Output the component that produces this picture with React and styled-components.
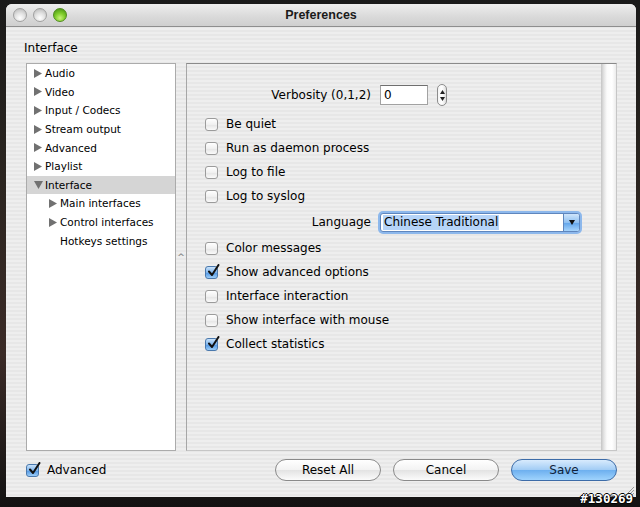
import React from "react";
import styled, { createGlobalStyle } from "styled-components";

const GlobalStyle = createGlobalStyle`
  html, body {
    margin: 0;
    padding: 0;
    background: #141414;
    font-family: "DejaVu Sans", "Noto Sans", sans-serif;
    color: #000;
  }
`;

const pinstripe = `repeating-linear-gradient(
  to bottom,
  #eeeeee 0px,
  #eeeeee 2px,
  #e7e7e7 2px,
  #e7e7e7 4px
)`;

const Page = styled.div`
  position: relative;
  width: 640px;
  height: 507px;
  box-sizing: border-box;
  padding: 4px 4px 10px 6px;
  background: linear-gradient(
    to bottom,
    #1a1a1a 0%,
    #2b2520 35%,
    #3b2b27 70%,
    #121212 100%
  );
`;

const Window = styled.div`
  position: relative;
  width: 630px;
  height: 493px;
  display: flex;
  flex-direction: column;
  border-radius: 6px 6px 0 0;
  overflow: hidden;
  background: ${pinstripe};
`;

const TitleBar = styled.div`
  flex-shrink: 0;
  height: 22px;
  display: grid;
  grid-template-columns: 1fr auto 1fr;
  align-items: center;
  background: linear-gradient(to bottom, #ededed, #d9d9d9 60%, #cfcfcf);
  border-bottom: 1px solid #8e8e8e;
`;

const Lights = styled.div`
  display: flex;
  gap: 6px;
  padding-left: 7px;
`;

const Light = styled.span`
  width: 14px;
  height: 14px;
  border-radius: 50%;
  box-sizing: border-box;
  border: 1px solid ${(p) => (p.$green ? "#4f8a1d" : "#a0a0a0")};
  background: ${(p) =>
    p.$green
      ? "radial-gradient(circle at 50% 75%, #c7f27a 0%, #7fcc2a 45%, #3f8a12 100%)"
      : "radial-gradient(circle at 50% 75%, #ffffff 0%, #e2e2e2 45%, #b3b3b3 100%)"};
`;

const Title = styled.div`
  font-family: "Liberation Sans", Arial, sans-serif;
  font-weight: bold;
  font-size: 12.5px;
  color: #1a1a1a;
`;

const Body = styled.div`
  flex: 1;
  display: flex;
  flex-direction: column;
  padding: 13px 19px 0 20px;
`;

const Heading = styled.div`
  margin-left: -2px;
  margin-bottom: 7px;
  font-size: 12px;
  line-height: 16px;
`;

const Main = styled.div`
  display: flex;
  height: 388px;
`;

const Tree = styled.div`
  width: 150px;
  box-sizing: border-box;
  border: 1px solid #ababab;
  background: #fff;
`;

const TreeRow = styled.div`
  height: 18.6px;
  display: flex;
  align-items: center;
  padding-left: ${(p) => (p.$level ? 22 : 7)}px;
  background: ${(p) => (p.$selected ? "#d5d5d5" : "transparent")};
  font-size: 10.5px;
`;

const Arrow = styled.span`
  width: 11px;
  height: 10px;
  display: inline-flex;
  align-items: center;
`;

const Splitter = styled.div`
  width: 10px;
  display: flex;
  align-items: center;
  justify-content: center;
  color: #777;
  font-size: 9px;
`;

const ContentPanel = styled.div`
  flex: 1;
  display: flex;
  border-top: 1px solid #8a8a8a;
  border-left: 1px solid #a6a6a6;
  border-right: 1px solid #c6c6c6;
  border-bottom: 1px solid #c6c6c6;
`;

const Form = styled.div`
  flex: 1;
  padding: 20px 0 0 18px;
  font-size: 12px;
`;

const ScrollTrack = styled.div`
  width: 15px;
  background: linear-gradient(
    to right,
    #c4c4c4 0px,
    #e4e4e4 3px,
    #fbfbfb 6px,
    #ffffff 11px,
    #ececec 15px
  );
`;

const FieldRow = styled.div`
  display: flex;
  align-items: center;
  height: ${(p) => p.$h}px;
  margin-bottom: ${(p) => p.$mb || 0}px;
`;

const FieldLabel = styled.div`
  width: 166px;
  margin-right: 9px;
  text-align: right;
`;

const NumberInput = styled.div`
  width: 48px;
  height: 20px;
  box-sizing: border-box;
  border: 1px solid #a2a2a2;
  border-top-color: #6f6f6f;
  background: #fff;
  padding-left: 3px;
  display: flex;
  align-items: center;
`;

const Stepper = styled.div`
  margin-left: 9px;
  width: 10px;
  height: 22px;
  box-sizing: border-box;
  border: 1px solid #8c8c8c;
  border-radius: 5px;
  background: linear-gradient(to right, #f4f4f4, #ffffff 50%, #dedede);
  display: flex;
  flex-direction: column;
  align-items: center;
  justify-content: space-around;
  padding: 3px 0;
`;

const Select = styled.div`
  width: 200px;
  height: 19px;
  box-sizing: border-box;
  border: 1px solid #5f86bd;
  border-radius: 3px;
  box-shadow: 0 0 0 2px #8db8ec;
  background: #fff;
  display: flex;
  align-items: center;
  padding-left: 2px;
  overflow: hidden;
`;

const SelectText = styled.span`
  background: #b6d4f8;
  padding: 0 1px;
  line-height: 15px;
`;

const SelectButton = styled.span`
  margin-left: auto;
  width: 15px;
  height: 100%;
  border-left: 1px solid #5f86bd;
  background: linear-gradient(to bottom, #cfe5fb, #8fc0f1 50%, #5fa3ea 51%, #a6d4fc);
  display: flex;
  align-items: center;
  justify-content: center;
`;

const CheckRow = styled.div`
  display: flex;
  align-items: center;
  gap: 8px;
  height: 24px;
`;

const Box = styled.span`
  position: relative;
  width: 13px;
  height: 13px;
  flex-shrink: 0;
  box-sizing: border-box;
  border-radius: 3px;
  border: 1px solid ${(p) => (p.$checked ? "#4b79ad" : "#9b9b9b")};
  background: ${(p) =>
    p.$checked
      ? "linear-gradient(to bottom, #c9e2fa, #7fb5ec 50%, #4f95e2 51%, #9ccdf8)"
      : "linear-gradient(to bottom, #ffffff, #f0f0f0 50%, #e4e4e4 51%, #fafafa)"};
`;

const Tick = styled.svg`
  position: absolute;
  left: 1px;
  top: -3px;
`;

const Footer = styled.div`
  display: flex;
  align-items: center;
  height: 22px;
  margin-top: 8px;
  font-size: 12px;
`;

const Spacer = styled.div`
  flex: 1;
`;

const ButtonRow = styled.div`
  display: flex;
  gap: 12px;
`;

const Button = styled.div`
  width: 106px;
  height: 22px;
  box-sizing: border-box;
  border-radius: 11px;
  display: flex;
  align-items: center;
  justify-content: center;
  font-size: 12px;
  border: 1px solid ${(p) => (p.$primary ? "#3d6ca8" : "#8a8a8a")};
  color: ${(p) => (p.$primary ? "#0f1f3a" : "#000")};
  background: ${(p) =>
    p.$primary
      ? "linear-gradient(to bottom, #d8ebfd 0%, #a3cdf5 48%, #6eb0ef 52%, #9fd3fd 100%)"
      : "linear-gradient(to bottom, #ffffff 0%, #f3f3f3 48%, #e3e3e3 52%, #fbfbfb 100%)"};
`;

const Grip = styled.svg`
  position: absolute;
  right: 2px;
  bottom: 2px;
`;

const Watermark = styled.div`
  position: absolute;
  right: 7px;
  bottom: 1px;
  font-family: "DejaVu Sans Mono", monospace;
  font-weight: bold;
  font-size: 12.5px;
  color: #fff;
  text-shadow: -1px 0 #000, 1px 0 #000, 0 -1px #000, 0 1px #000;
`;

const TriRight = () => (
  <svg width="8" height="9" viewBox="0 0 8 9">
    <polygon points="0,0 8,4.5 0,9" fill="#717171" />
  </svg>
);

const TriDown = () => (
  <svg width="9" height="8" viewBox="0 0 9 8">
    <polygon points="0,0 9,0 4.5,8" fill="#717171" />
  </svg>
);

const Checkbox = ({ checked }) => (
  <Box $checked={checked}>
    {checked && (
      <Tick width="13" height="13" viewBox="0 0 13 13">
        <path
          d="M2 7.5 L5 11 L11.5 1"
          fill="none"
          stroke="#111"
          strokeWidth="2"
          strokeLinecap="round"
          strokeLinejoin="round"
        />
      </Tick>
    )}
  </Box>
);

const treeItems = [
  { label: "Audio", arrow: "right" },
  { label: "Video", arrow: "right" },
  { label: "Input / Codecs", arrow: "right" },
  { label: "Stream output", arrow: "right" },
  { label: "Advanced", arrow: "right" },
  { label: "Playlist", arrow: "right" },
  { label: "Interface", arrow: "down", selected: true },
  { label: "Main interfaces", arrow: "right", level: 1 },
  { label: "Control interfaces", arrow: "right", level: 1 },
  { label: "Hotkeys settings", level: 1 },
];

const firstChecks = [
  { label: "Be quiet" },
  { label: "Run as daemon process" },
  { label: "Log to file" },
  { label: "Log to syslog" },
];

const secondChecks = [
  { label: "Color messages" },
  { label: "Show advanced options", checked: true },
  { label: "Interface interaction" },
  { label: "Show interface with mouse" },
  { label: "Collect statistics", checked: true },
];

const App = () => {
  return (
    <Page>
      <GlobalStyle />
      <Window>
        <TitleBar>
          <Lights>
            <Light />
            <Light />
            <Light $green />
          </Lights>
          <Title>Preferences</Title>
          <div />
        </TitleBar>
        <Body>
          <Heading>Interface</Heading>
          <Main>
            <Tree>
              {treeItems.map((item) => (
                <TreeRow
                  key={item.label}
                  $level={item.level}
                  $selected={item.selected}
                >
                  <Arrow>
                    {item.arrow === "right" && <TriRight />}
                    {item.arrow === "down" && <TriDown />}
                  </Arrow>
                  {item.label}
                </TreeRow>
              ))}
            </Tree>
            <Splitter>^</Splitter>
            <ContentPanel>
              <Form>
                <FieldRow $h={22} $mb={6}>
                  <FieldLabel>Verbosity (0,1,2)</FieldLabel>
                  <NumberInput>0</NumberInput>
                  <Stepper>
                    <svg width="5" height="4" viewBox="0 0 5 4">
                      <polygon points="2.5,0 5,4 0,4" fill="#222" />
                    </svg>
                    <svg width="5" height="4" viewBox="0 0 5 4">
                      <polygon points="0,0 5,0 2.5,4" fill="#222" />
                    </svg>
                  </Stepper>
                </FieldRow>
                {firstChecks.map((c) => (
                  <CheckRow key={c.label}>
                    <Checkbox checked={c.checked} />
                    {c.label}
                  </CheckRow>
                ))}
                <FieldRow $h={28}>
                  <FieldLabel>Language</FieldLabel>
                  <Select>
                    <SelectText>Chinese Traditional</SelectText>
                    <SelectButton>
                      <svg width="6" height="5" viewBox="0 0 6 5">
                        <polygon points="0,0 6,0 3,5" fill="#111" />
                      </svg>
                    </SelectButton>
                  </Select>
                </FieldRow>
                {secondChecks.map((c) => (
                  <CheckRow key={c.label}>
                    <Checkbox checked={c.checked} />
                    {c.label}
                  </CheckRow>
                ))}
              </Form>
              <ScrollTrack />
            </ContentPanel>
          </Main>
          <Footer>
            <CheckRow>
              <Checkbox checked />
              Advanced
            </CheckRow>
            <Spacer />
            <ButtonRow>
              <Button>Reset All</Button>
              <Button>Cancel</Button>
              <Button $primary>Save</Button>
            </ButtonRow>
          </Footer>
        </Body>
        <Grip width="10" height="10" viewBox="0 0 10 10">
          <path d="M10 2 L2 10 M10 5 L5 10 M10 8 L8 10" stroke="#9a9a9a" strokeWidth="1" />
        </Grip>
      </Window>
      <Watermark>#130269</Watermark>
    </Page>
  );
};

export default App;
